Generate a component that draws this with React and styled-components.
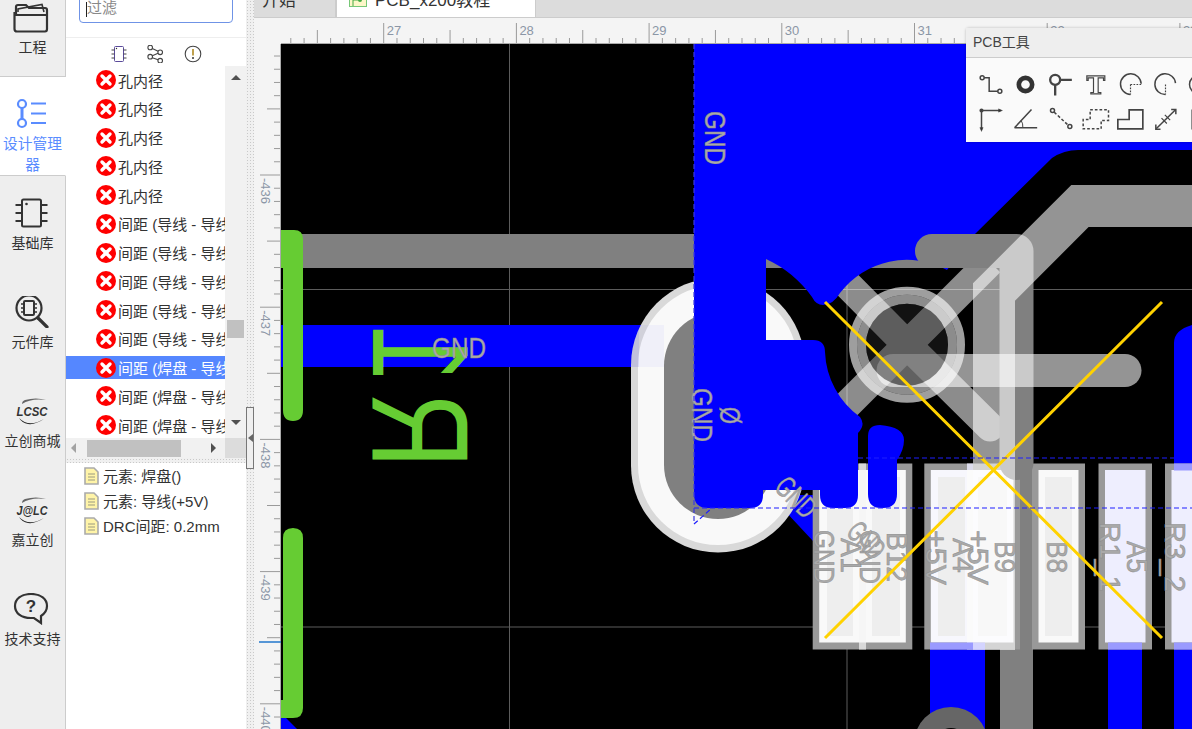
import React from "react";
import styled, { createGlobalStyle } from "styled-components";

const FONT = `"Liberation Sans", "Noto Sans CJK SC", sans-serif`;

const Global = createGlobalStyle`
  html, body { margin: 0; padding: 0; background: #fff; overflow: hidden; }
  * { box-sizing: border-box; }
  body { font-family: ${FONT}; }
`;

const Page = styled.div`
  display: flex;
  width: 1192px;
  height: 729px;
  overflow: hidden;
  position: relative;
`;

/* ---------- left rail ---------- */
const Rail = styled.nav`
  width: 66px;
  flex: none;
  display: flex;
  flex-direction: column;
  background: #eee;
`;
const RailItem = styled.div`
  height: ${(p) => (p.$first ? 77 : 99)}px;
  flex: ${(p) => (p.$last ? 1 : "none")};
  padding-top: ${(p) => (p.$first ? 1 : 21)}px;
  display: flex;
  flex-direction: column;
  align-items: center;
  text-align: center;
  background: ${(p) => (p.$active ? "#fff" : "transparent")};
  color: ${(p) => (p.$active ? "#5a8cff" : "#333")};
  border-right: 1px solid ${(p) => (p.$active ? "transparent" : "#ccc")};
  border-bottom: ${(p) => (p.$first || p.$active ? "1px solid #ccc" : "0")};
`;
const RailIcon = styled.svg`
  width: 44px;
  height: 32px;
  flex: none;
  margin-bottom: 4px;
`;
const RailLabel = styled.div`
  font-size: ${(p) => (p.$active ? 14.7 : 14)}px;
  line-height: 21px;
  width: 64px;
  white-space: ${(p) => (p.$active ? "normal" : "nowrap")};
`;
const LogoWord = styled.text`
  font-family: "Liberation Sans", sans-serif;
  font-weight: 700;
  font-style: italic;
  font-size: 13px;
  fill: #333;
`;

/* ---------- panel ---------- */
const Panel = styled.aside`
  width: 180px;
  flex: none;
  display: flex;
  flex-direction: column;
  background: #fff;
`;
const FilterBar = styled.div`
  height: 38px;
  flex: none;
  padding: 0 13px;
  border-bottom: 1px solid #eee;
  overflow: hidden;
`;
const FilterInput = styled.div`
  margin-top: -8px;
  height: 31px;
  border: 1px solid #6f93e6;
  border-radius: 4px;
  font-size: 15px;
  line-height: 29px;
  padding-left: 7px;
  color: #888;
  position: relative;
  &::before {
    content: "";
    position: absolute;
    left: 6px;
    top: 9px;
    height: 15px;
    width: 1px;
    background: #222;
  }
`;
const ViewTabs = styled.div`
  height: 28px;
  flex: none;
  display: flex;
  justify-content: center;
  align-items: center;
  gap: 19px;
  padding-top: 4px;
`;
const ViewIcon = styled.svg`
  width: 18px;
  height: 18px;
`;
const ListArea = styled.div`
  height: 372px;
  flex: none;
  display: flex;
`;
const Rows = styled.div`
  flex: 1;
  min-width: 0;
  padding-top: 2.5px;
  overflow: hidden;
`;
const Row = styled.div`
  height: 23px;
  margin-bottom: 5.75px;
  display: flex;
  align-items: center;
  padding-left: 30px;
  gap: 2px;
  font-size: 15px;
  white-space: nowrap;
  color: ${(p) => (p.$selected ? "#fff" : "#333")};
  background: ${(p) => (p.$selected ? "#5587ff" : "transparent")};
`;
const VBar = styled.div`
  width: 21px;
  flex: none;
  background: #f1f1f1;
  display: flex;
  flex-direction: column;
  align-items: center;
`;
const ArrowUp = styled.i`
  display: block;
  margin-top: 9px;
  width: 0;
  height: 0;
  border: 5px solid transparent;
  border-top: 0;
  border-bottom: 5px solid #505050;
`;
const ArrowDown = styled(ArrowUp)`
  margin-top: 82px;
  border-bottom: 0;
  border-top: 5px solid #505050;
`;
const VThumb = styled.div`
  width: 17px;
  height: 18px;
  margin-top: 240px;
  background: #c1c1c1;
`;
const HBar = styled.div`
  height: 20px;
  flex: none;
  display: flex;
  align-items: center;
  background: #f1f1f1;
`;
const ArrowSide = styled.i`
  display: block;
  flex: none;
  width: 0;
  height: 0;
  border: 5px solid transparent;
  margin-left: ${(p) => p.$ml}px;
  ${(p) =>
    p.$left
      ? "border-left: 0; border-right: 5px solid #a3a3a3;"
      : "border-right: 0; border-left: 5px solid #505050;"}
`;
const HThumb = styled.div`
  width: 94px;
  height: 17px;
  margin-left: 11px;
  background: #c1c1c1;
  flex: none;
`;
const HCorner = styled.div`
  margin-left: auto;
  width: 21px;
  height: 20px;
  background: #dcdcdc;
`;
const HSplit = styled.div`
  height: 5px;
  flex: none;
  background-color: #f0f0f0;
  background-image: radial-gradient(#c9c9c9 35%, transparent 40%);
  background-size: 3px 3px;
`;
const Props = styled.div`
  padding-top: 0;
`;
const PropRow = styled.div`
  height: 25px;
  display: flex;
  align-items: center;
  padding-left: 18px;
  gap: 4px;
  font-size: 15px;
  color: #333;
`;
const FileSvg = styled.svg`
  width: 15px;
  height: 18px;
  flex: none;
`;
const ErrSvg = styled.svg`
  width: 20px;
  height: 20px;
  flex: none;
`;

/* ---------- splitter ---------- */
const VSplit = styled.div`
  width: 8px;
  flex: none;
  position: relative;
  background-color: #f0f0f0;
  background-image: radial-gradient(#c9c9c9 35%, transparent 40%);
  background-size: 3px 3px;
`;
const SplitHandle = styled.div`
  position: absolute;
  left: 0;
  top: 407px;
  width: 8px;
  height: 62px;
  background: #efefef;
  border: 1px solid #777;
  display: flex;
  align-items: center;
  justify-content: center;
  &::before {
    content: "";
    border: 4px solid transparent;
    border-left: 0;
    border-right: 5px solid #666;
  }
`;

/* ---------- main ---------- */
const Main = styled.main`
  flex: 1;
  min-width: 0;
  display: flex;
  flex-direction: column;
  position: relative;
  overflow: hidden;
  background: #f4f4f4;
`;
const Tabs = styled.div`
  height: 18px;
  flex: none;
  display: flex;
  background: #dcdcdc;
  border-bottom: 1px solid #ccc;
`;
const Tab = styled.div`
  width: ${(p) => p.$w}px;
  height: 17px;
  padding-left: ${(p) => p.$pl}px;
  display: flex;
  gap: 8px;
  overflow: hidden;
  font-size: 17px;
  line-height: 17px;
  white-space: nowrap;
  color: #333;
  background: ${(p) => (p.$active ? "#fff" : "#dcdcdc")};
  border-left: ${(p) => (p.$active ? "1px solid #ccc" : "0")};
  border-right: 1px solid #ccc;
`;
const TabText = styled.span`
  margin-top: -8px;
`;
const TabIcon = styled.svg`
  width: 18px;
  height: 16px;
  margin-top: -9px;
  flex: none;
`;
const Workspace = styled.div`
  flex: 1;
  display: grid;
  grid-template-columns: 27px 1fr;
  grid-template-rows: 26px 1fr;
  min-height: 0;
`;
const Drawing = styled.svg`
  display: block;
  width: 100%;
  height: 100%;
`;
const RulerText = styled.text`
  font-family: "Liberation Sans", sans-serif;
  font-size: 13px;
  fill: #8b96a6;
`;
const PcbText = styled.text`
  font-family: "Liberation Sans", sans-serif;
  fill: #a9a9a9;
  stroke: #8c8c8c;
  stroke-width: 0.5;
`;
const SilkText = styled.text`
  font-family: "Liberation Sans", sans-serif;
  fill: #66cc33;
`;

/* ---------- floating tool window ---------- */
const ToolWindow = styled.section`
  position: absolute;
  left: 712px;
  top: 28px;
  width: 260px;
  height: 114px;
  background: #fafafa;
  border-radius: 3px 0 0 0;
  box-shadow: 0 0 3px rgba(0, 0, 0, 0.25);
`;
const ToolHeader = styled.header`
  height: 30px;
  background: #eee;
  border-bottom: 1px solid #ccc;
  font-size: 14px;
  line-height: 28px;
  padding-left: 7px;
  color: #444;
`;
const ToolBody = styled.div`
  padding: 8.5px 0 0 6.5px;
  display: grid;
  grid-template-columns: repeat(7, 35px);
  grid-auto-rows: 35px;
`;
const ToolSvg = styled.svg`
  width: 35px;
  height: 35px;
  fill: none;
  stroke: #444;
  stroke-width: 4.5;
`;

/* ---------- small icons ---------- */
const ErrorIcon = () => (
  <ErrSvg viewBox="0 0 20 20">
    <circle cx="10" cy="10" r="10" fill="#f00" />
    <path d="M6 6 L14 14 M14 6 L6 14" stroke="#fff" strokeWidth="3.4" strokeLinecap="round" />
  </ErrSvg>
);
const FileIcon = () => (
  <FileSvg viewBox="0 0 15 18">
    <path d="M1 1 H10 L14 5 V17 H1 Z" fill="#fff4a8" stroke="#aaa" strokeWidth="1.6" />
    <path d="M4 7 H11 M4 10 H11 M4 13 H11" stroke="#9a9a80" strokeWidth="1" />
  </FileSvg>
);

const ic = { fill: "none", stroke: "#333", strokeWidth: 2 };
const FolderIcon = () => (
  <RailIcon viewBox="0 0 44 32" {...ic}>
    <path d="M5 12 V6 Q5 4 7 4 H15 L18 7 H34 Q36 7 36 9 V28 Q36 30.5 34 30.5 H6 Q3.500 30.5 3.500 28 V12 Z M3.500 14 H36" strokeWidth="2.200" />
    <path d="M7 11 L7 8 L31 3.500 L33 11" strokeWidth="1.600" />
  </RailIcon>
);
const DesignIcon = () => (
  <RailIcon viewBox="0 0 44 32" fill="none" stroke="#5a8cff" strokeWidth="2.200">
    <circle cx="11" cy="6" r="4" />
    <circle cx="11" cy="25" r="4" />
    <path d="M11 10 V21" strokeWidth="3" />
    <path d="M20 5.500 H35 M20 15.500 H35 M20 25 H35" strokeWidth="1.800" />
  </RailIcon>
);
const ChipIcon = () => (
  <RailIcon viewBox="0 0 44 32" {...ic}>
    <rect x="11" y="2.500" width="19" height="27" rx="1.500" />
    <circle cx="15.500" cy="7" r="1.300" fill="#333" stroke="none" />
    <path d="M4.500 8 H11 M4.500 16 H11 M4.500 24 H11 M30 8 H36.500 M30 16 H36.500 M30 24 H36.500" />
  </RailIcon>
);
const SearchChipIcon = () => (
  <RailIcon viewBox="0 0 44 32" {...ic}>
    <circle cx="18" cy="12" r="12.500" strokeWidth="2.200" />
    <rect x="13" y="5" width="10" height="14" rx="1" />
    <path d="M10 8 H13 M10 12 H13 M10 16 H13 M23 8 H26 M23 12 H26 M23 16 H26" strokeWidth="1.400" />
    <path d="M27 22 L36 31" strokeWidth="3.200" strokeLinecap="round" />
  </RailIcon>
);
const LogoIcon = ({ word }) => (
  <RailIcon viewBox="0 0 44 32">
    <path d="M11 9 Q20 3 35 5 Q25 2 14 5 Q11 6 11 9 Z" fill="#666" />
    <path d="M8 23 Q18 33 33 24 Q24 30 17 29 Q11 28 8 23 Z" fill="#222" />
    <LogoWord x="21" y="21" textAnchor="middle" textLength="31" lengthAdjust="spacingAndGlyphs">{word}</LogoWord>
  </RailIcon>
);
const HelpIcon = () => (
  <RailIcon viewBox="0 0 44 32" {...ic}>
    <path d="M20 1 C30 1 36 6 36 13 C36 18 33 21 30 23 L30 30 L23 25 C22 25 21 25 20 25 C10 25 4 20 4 13 C4 6 10 1 20 1 Z" strokeWidth="2.200" />
    <text x="20" y="19" textAnchor="middle" fontFamily="Liberation Sans" fontWeight="700" fontSize="17" fill="#333" stroke="none">?</text>
  </RailIcon>
);

/* ---------- tool icons (centre = 0,0, units = 1/3 px) ---------- */
const toolIcons = [
  <>
    <circle cx="-25" cy="-20" r="6" />
    <circle cx="28" cy="20" r="6" />
    <path d="M-19 -20 H-4 V20 H22" />
  </>,
  <circle r="20" strokeWidth="14" stroke="#333" />,
  <>
    <circle cx="-16" cy="-14" r="15" strokeWidth="7" />
    <path d="M-16 1 V33 M-1 -14 H34" strokeWidth="7" />
  </>,
  <path d="M-26 -26 H28 V-12 H24 V-20 H8 V24 H16 V28 H-14 V24 H-6 V-20 H-22 V-12 H-26 Z" strokeWidth="3.500" />,
  <>
    <path d="M32 -2 A31 31 0 1 0 0 30" />
    <path d="M0 0 H32 M0 0 V30" strokeDasharray="5 4" strokeWidth="3.500" />
  </>,
  <>
    <path d="M30 -4 A31 31 0 1 0 0 30" />
    <path d="M0 0 V30" strokeDasharray="5 4" strokeWidth="3.500" />
  </>,
  <circle cx="-6" cy="0" r="27" />,
  <>
    <circle cx="-27" cy="-27" r="4" fill="#333" />
    <path d="M-27 -27 H30 M-27 -27 V30" />
    <path d="M24 -32 L36 -27 L24 -22 Z M-32 24 L-27 36 L-22 24 Z" fill="#333" strokeWidth="1" />
  </>,
  <>
    <path d="M-33 25 H35 M-33 25 L18 -30" />
    <path d="M-13 3 Q-7 12 -8 25" strokeWidth="3" />
  </>,
  <>
    <circle cx="-24" cy="-27" r="6" />
    <circle cx="28" cy="21" r="6" />
    <path d="M-19 -22 L23 17" strokeDasharray="9 6" />
  </>,
  <path d="M-16 -29 H39 V3 H17 V28 H-37 V0 H-16 Z" strokeDasharray="8 6" />,
  <path d="M-38 28 H37 V-29 H-4 V0 H-38 Z" strokeWidth="5" />,
  <>
    <path d="M-28 28 L30 -29" />
    <path d="M-29 15 V29 H-15 M17 -30 H31 V-16" />
    <path d="M-12 -4 L4 12 M-2 -14 L14 2" strokeWidth="3.500" />
  </>,
  <path d="M-25 -28 H30 V28 H-25 Z" />,
];

/* ---------- PCB drawing ---------- */
const Lbl = ({ x, y, len, size = 30, a = 90, children }) => (
  <PcbText
    transform={`translate(${x} ${y}) rotate(${a})`}
    fontSize={size}
    textLength={len}
    lengthAdjust="spacingAndGlyphs"
  >
    {children}
  </PcbText>
);

const Pad = ({ x, w, tint = "#f9f9f9", inner = "#eeeeee", insets = [] }) => (
  <>
    <rect x={x} y="463.500" width={w} height="186" fill="#999" />
    <rect x={x + 6.500} y="470" width={w - 13} height="172.500" fill={tint} />
    {insets.map(([ix, iw]) => (
      <rect key={ix} x={ix} y="477" width={iw} height="159" fill={inner} />
    ))}
  </>
);

const POUR =
  "M694 44 H1192 V150 H1078 Q1064 150 1052 158 L975 234 L947 270 A84 84 0 0 0 840 293 Q833 305 823 305 Q816 305 812 297 C800 280 785 268 766 259 V340 H813 Q825 340 825 352 A84 84 0 0 0 860 417 Q866 425 858 433 V495 Q858 508 845 508 H833 Q820 508 820 495 V490 H763 V495 Q763 508 750 508 H708 Q694 508 694 494 Z";
const FINGER =
  "M868 436 Q868 425 880 425 Q904 427 904 440 Q904 450 897 460 V494 Q897 508 883 508 H881 Q868 508 868 494 Z";

const PcbCanvas = () => (
  <Drawing viewBox="281 44 911 685" preserveAspectRatio="xMinYMin slice">
    <defs>
      <clipPath id="slot">
        <rect x="631" y="278" width="174" height="274.500" rx="87" />
      </clipPath>
    </defs>
    <rect x="281" y="44" width="911" height="685" fill="#000" />

    {/* grid */}
    <g stroke="#5c5c5c" strokeWidth="1">
      <path d="M509.500 44 V729 M847 44 V729 M281 289.500 H1192 M281 627 H1192" />
    </g>

    {/* via spokes, under the copper */}
    <g stroke="#fff" opacity="0.55" strokeWidth="29" fill="none">
      <path d="M835 272 L907 344.700 L990 427" strokeLinecap="round" />
      <path d="M990 262 L830 422" />
    </g>

    {/* bottom layer traces */}
    <rect x="281" y="234" width="720" height="34" fill="#808080" />
    <rect x="281" y="325" width="370" height="42" fill="#0000ff" />
    <path d="M281 718 H286 L297 729 H281 Z" fill="#0000ff" />
    <path d="M770 495 L813 541 V495 Z" fill="#0000ff" />
    <rect x="930" y="645" width="55" height="84" fill="#0000ff" />
    <rect x="1108" y="645" width="34" height="84" fill="#0000ff" />
    <path d="M1174 729 V343 Q1174 330 1192 325 V729 Z" fill="#0000ff" />
    <circle cx="951" cy="744" r="37" fill="#666" />
    <circle cx="951" cy="744" r="16" fill="#000" />
    <rect x="1000" y="463" width="33" height="266" fill="#808080" />

    {/* slotted pad */}
    <rect x="631" y="278" width="174" height="274.500" rx="87" fill="#d9d9d9" />
    <rect x="638" y="285" width="160" height="260" rx="80" fill="#f9f9f9" />
    <rect x="664" y="312" width="108" height="207" rx="54" fill="#808080" />
    <rect x="631" y="325" width="33" height="42" fill="#0000ff" fillOpacity="0.035" clipPath="url(#slot)" />
    <rect x="631" y="325" width="8" height="42" fill="#0000ff" fillOpacity="0.08" clipPath="url(#slot)" />

    {/* connector pads */}
    <Pad x={812.700} w={99.600} insets={[[827, 26], [872, 28]]} />
    <rect x="859" y="463.500" width="7" height="186" fill="#d8d8d8" />
    <rect x="859" y="470" width="7" height="172.500" fill="#f6f6f6" />
    <Pad x={924.300} w={95.700} tint="#f7f7fd" insets={[[938, 27], [978, 29]]} />
    <rect x="967" y="463.500" width="6" height="186" fill="#dcdcec" />
    <rect x="967" y="470" width="6" height="172.500" fill="#fbfbfb" />
    <Pad x={1032} w={53} insets={[[1045, 27]]} />
    <Pad x={1098.500} w={53.500} tint="#eeeefe" inner="#eeeefe" />
    <Pad x={1165} w={40} tint="#eeeefe" inner="#eeeefe" />
    <rect x="930" y="642.500" width="55" height="7" fill="#9a9aff" />
    <rect x="1108" y="642.500" width="34" height="7" fill="#9a9aff" />
    <rect x="1174" y="642.500" width="18" height="7" fill="#9a9aff" />
    <rect x="1174" y="463.500" width="18" height="7" fill="#9a9aff" />

    {/* copper pour */}
    <path d={POUR} fill="#0000ff" />
    <path d={FINGER} fill="#0000ff" />

    {/* gray traces on top */}
    <path d="M932 251 H1016.500 V463" stroke="#808080" strokeWidth="34" fill="none" strokeLinecap="round" strokeLinejoin="round" />
    <g fill="none" stroke="#fff" strokeOpacity="0.58">
      <path d="M994 650 V292 L1080 206 H1192" strokeWidth="42" />
      <path d="M893 370.500 H1125" strokeWidth="33" strokeLinecap="round" />
    </g>

    {/* via */}
    <circle cx="907" cy="344.700" r="54" fill="none" stroke="#fff" strokeOpacity="0.62" strokeWidth="8" />
    <circle cx="907" cy="344.700" r="45.500" fill="none" stroke="#fff" strokeOpacity="0.55" strokeWidth="9" />
    <circle cx="907" cy="344.700" r="41" fill="#000" fillOpacity="0.42" />
    <circle cx="907" cy="344.700" r="41" fill="#fff" fillOpacity="0.07" />

    {/* green silk */}
    <path d="M281 230 H294 Q303 230 303 239 V410 Q303 421 293 421 Q283 421 283 410 V268 H281 Z" fill="#66cc33" />
    <path d="M283 538 Q283 528 293 528 Q303 528 303 538 V708 Q303 718 293 718 H281 V700 H283 Z" fill="#66cc33" />
    <SilkText transform="matrix(0 -0.76 -1 0 373 468)" fontSize="138">R</SilkText>
    <SilkText transform="matrix(0 -0.76 -1 0 373 383)" fontSize="138">1</SilkText>

    {/* labels */}
    <Lbl x={432} y={358} len={54} a={0}>GND</Lbl>
    <Lbl x={705} y={111} len={54}>GND</Lbl>
    <Lbl x={692} y={388} len={54}>GND</Lbl>
    <Lbl x={720} y={407} len={17} size={29}>Ø</Lbl>
    <Lbl x={773} y={488.500} len={45} a={45}>GND</Lbl>
    <Lbl x={814} y={530} len={54}>GND</Lbl>
    <Lbl x={841} y={538} len={35}>A1</Lbl>
    <Lbl x={860} y={530} len={54}>GND</Lbl>
    <Lbl x={845} y={533.500} len={40} a={45}>GND</Lbl>
    <Lbl x={887} y={532} len={50}>B12</Lbl>
    <Lbl x={926} y={530} len={55}>+5V</Lbl>
    <Lbl x={953} y={538} len={35}>A4</Lbl>
    <Lbl x={968} y={530} len={55}>+5V</Lbl>
    <Lbl x={995} y={541} len={32}>B9</Lbl>
    <Lbl x={1047} y={541} len={32}>B8</Lbl>
    <Lbl x={1127} y={541} len={32}>A5</Lbl>
    <Lbl x={1100} y={522} len={70}>R1_1</Lbl>
    <Lbl x={1165} y={522} len={70}>R3_2</Lbl>

    {/* ratline cross */}
    <path d="M825 302 L1162 638 M825 638 L1162 302" stroke="#ffd200" strokeWidth="3" fill="none" />

    {/* dashed outlines */}
    <g fill="none" stroke="#1f1fff" strokeWidth="1.200" strokeDasharray="5 3">
      <path d="M694 508 H1192" />
      <path d="M858 458 H1174" />
      <path d="M694 524 L712 508" />
      <path d="M694 44 V524" stroke="#3a3ae0" />
    </g>
  </Drawing>
);

/* ---------- rulers ---------- */
const HRuler = () => {
  const step = 13.27;
  const base = 383.7;
  const ticks = [];
  for (let i = -7; i < 62; i++) {
    const x = base + i * step;
    const kind = ((i % 10) + 10) % 10;
    const top = kind === 0 ? 23 : kind === 5 ? 30 : 38;
    ticks.push(<path key={i} d={`M${x} ${top} V44`} stroke="#9a9a9a" strokeWidth="1" />);
  }
  return (
    <Drawing viewBox="281 18 911 26" preserveAspectRatio="xMinYMin slice">
      {ticks}
      <path d="M281 43.500 H1192" stroke="#aaa" />
      {[27, 28, 29, 30, 31, 32, 33].map((n, i) => (
        <RulerText key={n} x={base + 3 + i * 132.7} y="35">{n}</RulerText>
      ))}
    </Drawing>
  );
};
const VRuler = () => {
  const step = 13.22;
  const base = 175;
  const ticks = [];
  for (let i = -13; i < 42; i++) {
    const y = base + i * step;
    const kind = ((i % 10) + 10) % 10;
    const left = kind === 0 ? 260 : kind === 5 ? 267 : 274;
    ticks.push(<path key={i} d={`M${left} ${y} H281`} stroke="#9a9a9a" strokeWidth="1" />);
  }
  return (
    <Drawing viewBox="254 44 27 685" preserveAspectRatio="xMinYMin slice">
      {ticks}
      <path d="M280.500 44 V729" stroke="#aaa" />
      <path d="M259 642 H281" stroke="#2277cc" strokeWidth="1.500" />
      {["-436", "-437", "-438", "-439", "-440"].map((n, i) => (
        <RulerText key={n} transform={`translate(260.500 ${base + 3 + i * 132.2}) rotate(90)`}>{n}</RulerText>
      ))}
    </Drawing>
  );
};

const errors = [
  ...Array(5).fill("孔内径"),
  ...Array(5).fill("间距 (导线 - 导线 - 0.2mm)"),
  ...Array(3).fill("间距 (焊盘 - 导线 - 0.2mm)"),
];

export default function App() {
  return (
    <Page>
      <Global />
      <Rail>
        <RailItem $first>
          <FolderIcon />
          <RailLabel>工程</RailLabel>
        </RailItem>
        <RailItem $active>
          <DesignIcon />
          <RailLabel $active>设计管理器</RailLabel>
        </RailItem>
        <RailItem>
          <ChipIcon />
          <RailLabel>基础库</RailLabel>
        </RailItem>
        <RailItem>
          <SearchChipIcon />
          <RailLabel>元件库</RailLabel>
        </RailItem>
        <RailItem>
          <LogoIcon word="LCSC" />
          <RailLabel>立创商城</RailLabel>
        </RailItem>
        <RailItem>
          <LogoIcon word="J@LC" />
          <RailLabel>嘉立创</RailLabel>
        </RailItem>
        <RailItem $last>
          <HelpIcon />
          <RailLabel>技术支持</RailLabel>
        </RailItem>
      </Rail>

      <Panel>
        <FilterBar>
          <FilterInput>过滤</FilterInput>
        </FilterBar>
        <ViewTabs>
          <ViewIcon viewBox="0 0 18 18" fill="none" stroke="#444" strokeWidth="1">
            <rect x="4.500" y="1.500" width="9" height="15" rx="1" stroke="#5a4a9a" />
            <circle cx="6.500" cy="3.500" r="0.700" fill="#333" stroke="none" />
            <path d="M1.500 5 H4.500 M1.500 9 H4.500 M1.500 13 H4.500 M13.500 5 H16.500 M13.500 9 H16.500 M13.500 13 H16.500" />
          </ViewIcon>
          <ViewIcon viewBox="0 0 18 18" fill="none" stroke="#444" strokeWidth="1.100">
            <circle cx="3.200" cy="2.500" r="2.300" />
            <circle cx="13.200" cy="7.300" r="2.300" />
            <circle cx="3.200" cy="11.700" r="2.300" />
            <circle cx="13.200" cy="15.700" r="2.300" />
            <path d="M5.300 3.500 L11.100 6.300 M5.300 10.800 L11.100 8.200 M5.300 12.700 L11.100 14.700" />
          </ViewIcon>
          <ViewIcon viewBox="0 0 18 18" fill="none" stroke="#444" strokeWidth="1.100">
            <circle cx="9" cy="9" r="7.800" />
            <path d="M9 4 V10.500" stroke="#b08a20" strokeWidth="1.600" />
            <circle cx="9" cy="13" r="1" fill="#333" stroke="none" />
          </ViewIcon>
        </ViewTabs>
        <ListArea>
          <Rows>
            {errors.map((t, i) => (
              <Row key={i} $selected={i === 10}>
                <ErrorIcon />
                {t}
              </Row>
            ))}
          </Rows>
          <VBar>
            <ArrowUp />
            <VThumb />
            <ArrowDown />
          </VBar>
        </ListArea>
        <HBar>
          <ArrowSide $left $ml={5} />
          <HThumb />
          <ArrowSide $ml={30} />
          <HCorner />
        </HBar>
        <HSplit />
        <Props>
          <PropRow><FileIcon />元素: 焊盘()</PropRow>
          <PropRow><FileIcon />元素: 导线(+5V)</PropRow>
          <PropRow><FileIcon />DRC间距: 0.2mm</PropRow>
        </Props>
      </Panel>

      <VSplit>
        <SplitHandle />
      </VSplit>

      <Main>
        <Tabs>
          <Tab $w={82} $pl={8}><TabText>开始</TabText></Tab>
          <Tab $w={200} $pl={12} $active>
            <TabIcon viewBox="0 0 18 16">
              <rect x="0.500" y="0.500" width="17" height="15" fill="#fdf7c8" stroke="#77c777" />
              <path d="M4 15 V9 H11" stroke="#44aa44" fill="none" />
              <circle cx="11" cy="9" r="2" fill="#44aa44" />
            </TabIcon>
            <TabText>PCB_x200教程</TabText>
          </Tab>
        </Tabs>
        <Workspace>
          <div />
          <HRuler />
          <VRuler />
          <PcbCanvas />
        </Workspace>
        <ToolWindow>
          <ToolHeader>PCB工具</ToolHeader>
          <ToolBody>
            {toolIcons.map((icon, i) => (
              <ToolSvg key={i} viewBox="-52.5 -52.5 105 105">{icon}</ToolSvg>
            ))}
          </ToolBody>
        </ToolWindow>
      </Main>
    </Page>
  );
}
